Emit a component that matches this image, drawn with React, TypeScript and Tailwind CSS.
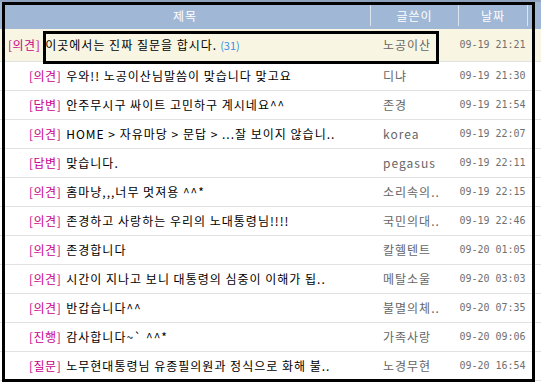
const rows = [
  { tag: '의견', title: '이곳에서는 진짜 질문을 합시다.', count: '(31)', author: '노공이산', date: '09-19 21:21', top: true },
  { tag: '의견', title: '우와!! 노공이산님말씀이 맞습니다 맞고요', author: '디냐', date: '09-19 21:30' },
  { tag: '답변', title: '안주무시구 싸이트 고민하구 계시네요^^', author: '존경', date: '09-19 21:54' },
  { tag: '의견', title: 'HOME > 자유마당 > 문답 > ...잘 보이지 않습니..', author: 'korea', date: '09-19 22:07' },
  { tag: '답변', title: '맞습니다.', author: 'pegasus', date: '09-19 22:11' },
  { tag: '의견', title: '홈마냥,,,너무 멋져용 ^^*', author: '소리속의..', date: '09-19 22:15' },
  { tag: '의견', title: '존경하고 사랑하는 우리의 노대통령님!!!!', author: '국민의대..', date: '09-19 22:46' },
  { tag: '의견', title: '존경합니다', author: '칼헬텐트', date: '09-20 01:05' },
  { tag: '의견', title: '시간이 지나고 보니 대통령의 심중이 이해가 됩..', author: '메탈소울', date: '09-20 03:03' },
  { tag: '의견', title: '반갑습니다^^', author: '불멸의체..', date: '09-20 07:35' },
  { tag: '진행', title: '감사합니다~` ^^*', author: '가족사랑', date: '09-20 09:06' },
  { tag: '질문', title: '노무현대통령님 유종필의원과 정식으로 화해 불..', author: '노경무현', date: '09-20 16:54' },
];

const HeadSep = () => <div className="w-px h-[21px] bg-[#dbe4ef]" />;

export default function App() {
  return (
    <div className="relative w-[541px] h-[385px] bg-white overflow-hidden font-['Noto_Sans_CJK_KR',sans-serif] text-[12px]">
      <div className="h-[2px] bg-[#8fa2bd]" />
      <div className="flex items-center h-[27px] bg-[#a0b8d6] text-white leading-none tracking-[1px]">
        <div className="w-[370px] text-center">제목</div>
        <HeadSep />
        <div className="w-[87px] text-center">글쓴이</div>
        <HeadSep />
        <div className="w-[68px] text-center">날짜</div>
        <HeadSep />
        <div className="flex-1" />
      </div>
      {rows.map((r, i) => (
        <div
          key={i}
          className={
            r.top
              ? 'flex items-center h-[33px] border-b border-[#e2e2e2] bg-[#f8f6e2] leading-none'
              : 'flex items-center h-[29px] border-b border-[#e2e2e2] leading-none'
          }
        >
          <div className={r.top ? 'w-[370px] pl-[8px] whitespace-nowrap' : 'w-[370px] pl-[29px] whitespace-nowrap'}>
            <span className="text-[#c8008a] tracking-[0.5px]">[{r.tag}]</span>
            <span className="ml-[5px] text-black tracking-[1px]">{r.title}</span>
            {r.count && <span className="ml-[3px] text-[11px] text-[#3d8fe8]">{r.count}</span>}
          </div>
          <div className="w-[88px] pl-[13px] text-[#666] whitespace-nowrap tracking-[1px]">{r.author}</div>
          <div className="w-[69px] text-center text-[10px] text-[#707070] font-['DejaVu_Sans_Mono',monospace] whitespace-nowrap">
            {r.date}
          </div>
        </div>
      ))}
      <div className="absolute left-[2px] top-[2px] w-[533px] h-[380px] border-[3px] border-black" />
      <div className="absolute left-[43px] top-[31px] w-[396px] h-[33px] border-[3px] border-black" />
    </div>
  );
}
